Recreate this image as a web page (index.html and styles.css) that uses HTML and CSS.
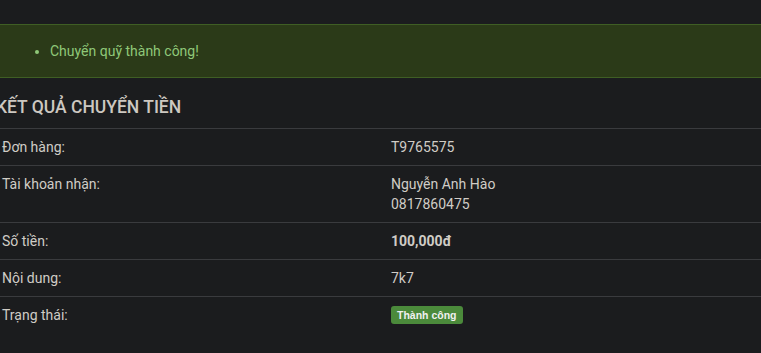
FILE: index.html
```html
<!DOCTYPE html>
<html lang="vi">
<head>
    <meta charset="UTF-8">
    <title>Kết quả chuyển tiền</title>
    <link rel="stylesheet" href="styles.css">
</head>
<body>

    <div class="content">
        <div class="alert-success">
            <ul>
                <li>Chuyển quỹ thành công!</li>
            </ul>
        </div>

        <h3 class="title">KẾT QUẢ CHUYỂN TIỀN</h3>

        <table class="result-table">
            <tr>
                <td class="label">Đơn hàng:</td>
                <td>T9765575</td>
            </tr>
            <tr>
                <td class="label">Tài khoản nhận:</td>
                <td>Nguyễn Anh Hào<br>0817860475</td>
            </tr>
            <tr>
                <td class="label">Số tiền:</td>
                <td><b>100,000đ</b></td>
            </tr>
            <tr>
                <td class="label">Nội dung:</td>
                <td>7k7</td>
            </tr>
            <tr>
                <td class="label">Trạng thái:</td>
                <td><span class="badge-success">Thành công</span></td>
            </tr>
        </table>
    </div>

</body>
</html>
```

FILE: styles.css
```css
body {
    margin: 0;
    background-color: #1b1c1e;
    color: #d0ccc6;
    font-family: Roboto, "Liberation Sans", sans-serif;
    font-size: 14px;
    line-height: 20px;
    overflow: hidden;
}

.content {
    margin: 24px -6px 0;
}

.alert-success {
    background-color: #2b3a18;
    border-top: 1px solid #3f5e24;
    border-bottom: 1px solid #3f5e24;
    color: #8fc878;
    padding: 16px;
}

.alert-success ul {
    margin: 0;
    padding-left: 40px;
}

.title {
    margin: 19px 0 11px 2px;
    font-size: 17.5px;
    font-weight: 500;
    line-height: 20px;
    color: #cdc8c1;
}

.result-table {
    width: 100%;
    border-collapse: collapse;
    table-layout: fixed;
}

.result-table td {
    padding: 8px;
    border-top: 1px solid #3a3b3e;
    vertical-align: top;
}

.result-table td.label {
    width: 373px;
}

.badge-success {
    display: inline-block;
    background-color: #4b8a3b;
    color: #f0f0f0;
    font-family: "Liberation Sans", Arial, sans-serif;
    font-weight: bold;
    font-size: 10.5px;
    line-height: 14px;
    padding: 2px 6px;
    border-radius: 3px;
    vertical-align: 1px;
}
```
